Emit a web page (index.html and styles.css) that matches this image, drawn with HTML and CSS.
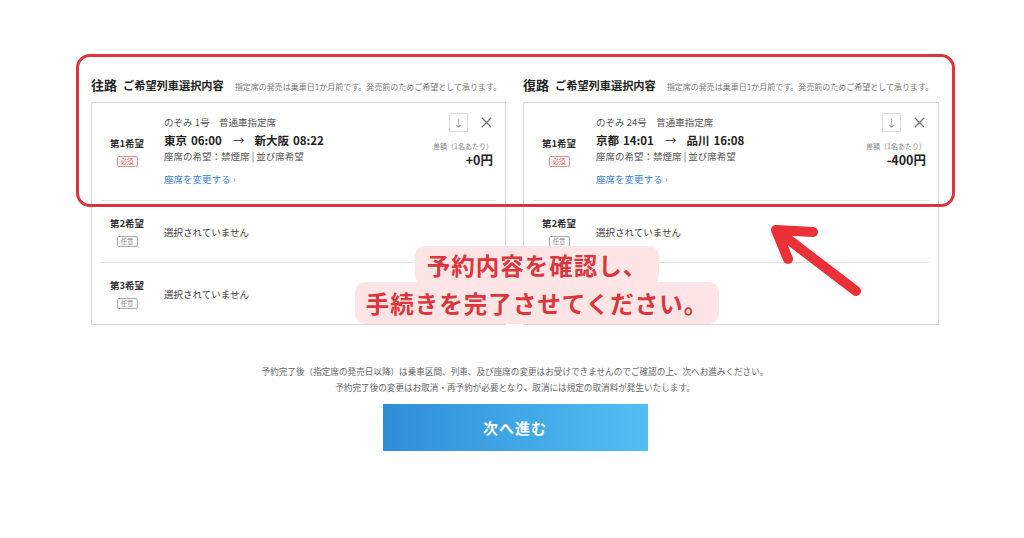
FILE: index.html
```html
<!DOCTYPE html>
<html lang="ja">
<head>
  <meta charset="UTF-8">
  <title>ご希望列車選択内容</title>
  <link rel="stylesheet" href="styles.css">
</head>
<body>
  <div class="page">

    <div class="columns">
      <!-- 往路 -->
      <section class="trip">
        <div class="trip-head">
          <span class="dir">往路</span>
          <span class="sub">ご希望列車選択内容</span>
          <span class="note">指定席の発売は乗車日1か月前です。発売前のためご希望として承ります。</span>
        </div>
        <div class="box">
          <div class="row row-main">
            <div class="rank">
              <span class="rank-name">第1希望</span>
              <span class="tag tag-req">必須</span>
            </div>
            <div class="info">
              <p class="train">のぞみ 1号　普通車指定席</p>
              <p class="route"><span>東京</span><span class="time">06:00</span><span class="arrow">→</span><span>新大阪</span><span class="time">08:22</span></p>
              <p class="seat">座席の希望：禁煙席 | 並び席希望</p>
              <a class="change" href="#">座席を変更する ›</a>
            </div>
            <div class="price">
              <div class="tools">
                <span class="sort">↓</span>
                <svg class="close" width="11" height="11" viewBox="0 0 11 11"><path d="M1 1 L10 10 M10 1 L1 10" stroke="#777" stroke-width="1.3" fill="none"/></svg>
              </div>
              <span class="price-label">差額（1名あたり）</span>
              <span class="price-value">+0円</span>
            </div>
          </div>
          <div class="row">
            <div class="rank">
              <span class="rank-name">第2希望</span>
              <span class="tag">任意</span>
            </div>
            <p class="empty">選択されていません</p>
          </div>
          <div class="row">
            <div class="rank">
              <span class="rank-name">第3希望</span>
              <span class="tag">任意</span>
            </div>
            <p class="empty">選択されていません</p>
          </div>
        </div>
      </section>

      <!-- 復路 -->
      <section class="trip">
        <div class="trip-head">
          <span class="dir">復路</span>
          <span class="sub">ご希望列車選択内容</span>
          <span class="note">指定席の発売は乗車日1か月前です。発売前のためご希望として承ります。</span>
        </div>
        <div class="box">
          <div class="row row-main">
            <div class="rank">
              <span class="rank-name">第1希望</span>
              <span class="tag tag-req">必須</span>
            </div>
            <div class="info">
              <p class="train">のぞみ 24号　普通車指定席</p>
              <p class="route"><span>京都</span><span class="time">14:01</span><span class="arrow">→</span><span>品川</span><span class="time">16:08</span></p>
              <p class="seat">座席の希望：禁煙席 | 並び席希望</p>
              <a class="change" href="#">座席を変更する ›</a>
            </div>
            <div class="price">
              <div class="tools">
                <span class="sort">↓</span>
                <svg class="close" width="11" height="11" viewBox="0 0 11 11"><path d="M1 1 L10 10 M10 1 L1 10" stroke="#777" stroke-width="1.3" fill="none"/></svg>
              </div>
              <span class="price-label">差額（1名あたり）</span>
              <span class="price-value">-400円</span>
            </div>
          </div>
          <div class="row">
            <div class="rank">
              <span class="rank-name">第2希望</span>
              <span class="tag">任意</span>
            </div>
            <p class="empty">選択されていません</p>
          </div>
          <div class="row">
            <div class="rank">
              <span class="rank-name">第3希望</span>
              <span class="tag">任意</span>
            </div>
            <p class="empty">選択されていません</p>
          </div>
        </div>
      </section>
    </div>

    <div class="footer">
      <p class="caution">予約完了後（指定席の発売日以降）は乗車区間、列車、及び座席の変更はお受けできませんのでご確認の上、次へお進みください。<br>予約完了後の変更はお取消・再予約が必要となり、取消には規定の取消料が発生いたします。</p>
      <button class="next">次へ進む</button>
    </div>

    <!-- 注釈 -->
    <div class="frame"></div>
    <svg class="pointer" width="110" height="90" viewBox="0 0 110 90">
      <path d="M14 15 L94 76 M14 15 L51 17 M14 15 L26 44" fill="none" stroke="#ec3038" stroke-width="10" stroke-linecap="round" stroke-linejoin="round"/>
    </svg>
    <div class="callout">
      <div class="callout-line first">予約内容を確認し、</div>
      <div class="callout-line">手続きを完了させてください。</div>
    </div>

  </div>
</body>
</html>
```

FILE: styles.css
```css
body {
  margin: 0;
  font-family: "Noto Sans CJK JP", "Noto Sans", sans-serif;
  color: #333;
  background-color: #fff;
}

p {
  margin: 0;
}

.page {
  position: relative;
  width: 1024px;
  height: 538px;
  padding-top: 75px;
  box-sizing: border-box;
}

.columns {
  display: grid;
  grid-template-columns: 415px 416px;
  column-gap: 17px;
  margin-left: 91px;
  width: 848px;
}

.trip-head {
  display: flex;
  align-items: baseline;
  height: 20px;
  line-height: 20px;
  margin-bottom: 7px;
  white-space: nowrap;
}

.dir {
  font-size: 13px;
  font-weight: bold;
  color: #222;
}

.sub {
  font-size: 11.2px;
  font-weight: bold;
  color: #222;
  margin-left: 6px;
}

.note {
  font-size: 8px;
  color: #777;
  margin-left: 11px;
}

.box {
  border: 1px solid #d9d9d9;
}

.row {
  display: flex;
  align-items: center;
  margin: 0 9px;
  height: 61px;
}

.row + .row {
  border-top: 1px solid #e3e3e3;
}

.row-main {
  height: auto;
  padding: 12px 0 13px;
}

.rank {
  width: 52px;
  display: flex;
  flex-direction: column;
  align-items: center;
  gap: 6px;
  margin-right: 11px;
}

.rank-name {
  font-size: 9.5px;
  font-weight: bold;
  line-height: 14px;
  color: #333;
}

.tag {
  font-size: 6.5px;
  line-height: 9px;
  padding: 0 3px;
  border: 1px solid #aaa;
  border-radius: 2px;
  color: #888;
}

.tag-req {
  border-color: #e38c8c;
  color: #d9534f;
}

.info {
  flex: 1;
}

.train, .seat {
  font-size: 9.5px;
  line-height: 15px;
  color: #555;
}

.route {
  font-size: 11.5px;
  font-weight: bold;
  line-height: 17px;
  margin-top: 2px;
  color: #222;
}

.route .time {
  margin-left: 4px;
}

.route .arrow {
  margin: 0 10px 0 11px;
  font-weight: normal;
}

.change {
  display: block;
  margin-top: 8px;
  font-size: 9.5px;
  line-height: 15px;
  color: #3f86d0;
  text-decoration: none;
}

.price {
  align-self: flex-start;
  display: flex;
  flex-direction: column;
  align-items: flex-end;
  padding-right: 3px;
}

.tools {
  display: flex;
  align-items: center;
  gap: 13px;
  margin-top: -2px;
  margin-right: 1px;
}

.sort {
  width: 17px;
  height: 17px;
  border: 1px solid #ddd;
  text-align: center;
  font-size: 10px;
  line-height: 17px;
  color: #888;
}

.price-label {
  margin-top: 9px;
  font-size: 7px;
  line-height: 10px;
  color: #888;
}

.price-value {
  margin-top: 1px;
  font-size: 12.5px;
  font-weight: bold;
  line-height: 16px;
  color: #222;
}

.empty {
  font-size: 9.5px;
  color: #444;
}

.footer {
  margin: 38px 0 0 91px;
  width: 848px;
  text-align: center;
}

.caution {
  font-size: 8.6px;
  line-height: 16px;
  color: #666;
}

.next {
  display: block;
  width: 265px;
  height: 47px;
  margin: 9px auto 0;
  border: none;
  background: linear-gradient(90deg, #2e8dd8, #52bff3);
  color: #fff;
  font-family: inherit;
  font-size: 15px;
  font-weight: bold;
  letter-spacing: 1px;
}

/* 注釈レイヤー */
.frame {
  position: absolute;
  left: 76px;
  top: 54px;
  width: 873px;
  height: 147px;
  border: 3px solid #d9363e;
  border-radius: 14px;
}

.pointer {
  position: absolute;
  left: 762px;
  top: 215px;
}

.callout {
  position: absolute;
  left: 350px;
  top: 246px;
  width: 374px;
  display: flex;
  flex-direction: column;
  align-items: center;
}

.callout-line {
  background-color: #fde5e5;
  color: #dc353c;
  font-size: 23.5px;
  font-weight: bold;
  letter-spacing: 1px;
  line-height: 32px;
  padding: 5px 11px;
  border-radius: 10px;
}

.callout-line.first {
  padding: 3px 12px 4px;
  margin-bottom: -3px;
}
```
